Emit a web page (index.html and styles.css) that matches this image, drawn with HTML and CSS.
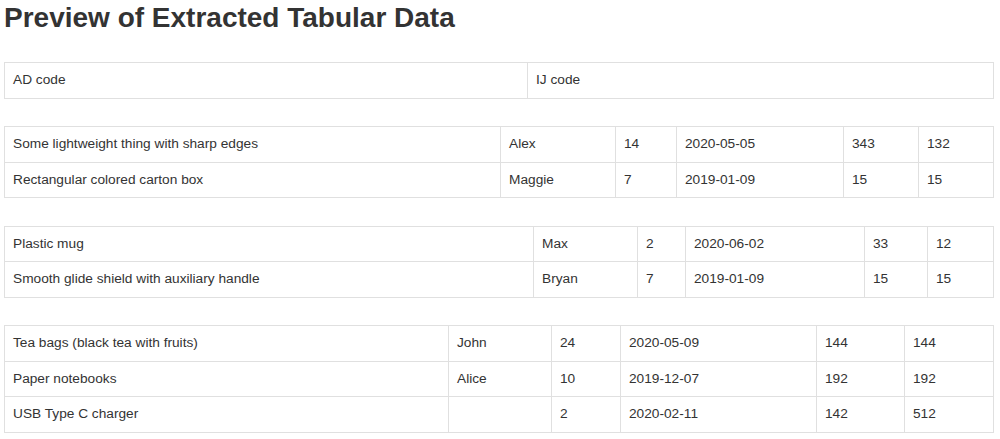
FILE: index.html
```html
<!DOCTYPE html>
<html lang="en">
<head>
<meta charset="utf-8">
<title>Preview of Extracted Tabular Data</title>
<link rel="stylesheet" href="styles.css">
</head>
<body>
<div class="page">
  <h1 class="title">Preview of Extracted Tabular Data</h1>

  <table class="grid t0">
    <colgroup><col class="c1"><col class="c2"></colgroup>
    <tbody>
      <tr><td>AD code</td><td>IJ code</td></tr>
    </tbody>
  </table>

  <table class="grid t1">
    <colgroup><col class="c1"><col class="c2"><col class="c3"><col class="c4"><col class="c5"><col class="c6"></colgroup>
    <tbody>
      <tr><td>Some lightweight thing with sharp edges</td><td>Alex</td><td>14</td><td>2020-05-05</td><td>343</td><td>132</td></tr>
      <tr><td>Rectangular colored carton box</td><td>Maggie</td><td>7</td><td>2019-01-09</td><td>15</td><td>15</td></tr>
    </tbody>
  </table>

  <table class="grid t2">
    <colgroup><col class="c1"><col class="c2"><col class="c3"><col class="c4"><col class="c5"><col class="c6"></colgroup>
    <tbody>
      <tr><td>Plastic mug</td><td>Max</td><td>2</td><td>2020-06-02</td><td>33</td><td>12</td></tr>
      <tr><td>Smooth glide shield with auxiliary handle</td><td>Bryan</td><td>7</td><td>2019-01-09</td><td>15</td><td>15</td></tr>
    </tbody>
  </table>

  <table class="grid t3">
    <colgroup><col class="c1"><col class="c2"><col class="c3"><col class="c4"><col class="c5"><col class="c6"></colgroup>
    <tbody>
      <tr><td>Tea bags (black tea with fruits)</td><td>John</td><td>24</td><td>2020-05-09</td><td>144</td><td>144</td></tr>
      <tr><td>Paper notebooks</td><td>Alice</td><td>10</td><td>2019-12-07</td><td>192</td><td>192</td></tr>
      <tr><td>USB Type C charger</td><td></td><td>2</td><td>2020-02-11</td><td>142</td><td>512</td></tr>
    </tbody>
  </table>
</div>
</body>
</html>
```

FILE: styles.css
```css
html, body {
  margin: 0;
  padding: 0;
  background: #ffffff;
}

body {
  font-family: "Liberation Sans", Arial, Helvetica, sans-serif;
  color: #333333;
  font-size: 14px;
}

.page {
  padding: 0 7px 0 4px;
}

.title {
  margin: 0 0 26px 0;
  font-size: 28px;
  line-height: 36px;
  font-weight: bold;
  color: #333333;
}

.grid {
  width: 989px;
  border-collapse: collapse;
  table-layout: fixed;
  margin: 0 0 27.5px 0;
}

.grid td {
  border: 1px solid #e0e0e0;
  padding: 8px 8px;
  line-height: 18.5px;
  font-size: 13.7px;
  white-space: nowrap;
  vertical-align: top;
}

.t0 .c1 { width: 523px; }
.t0 .c2 { width: 466px; }

.t1 .c1 { width: 496px; }
.t1 .c2 { width: 115px; }
.t1 .c3 { width: 61px; }
.t1 .c4 { width: 167px; }
.t1 .c5 { width: 75px; }
.t1 .c6 { width: 75px; }

.t2 .c1 { width: 529px; }
.t2 .c2 { width: 104px; }
.t2 .c3 { width: 48px; }
.t2 .c4 { width: 179px; }
.t2 .c5 { width: 63px; }
.t2 .c6 { width: 66px; }

.t3 .c1 { width: 444px; }
.t3 .c2 { width: 103px; }
.t3 .c3 { width: 69px; }
.t3 .c4 { width: 196px; }
.t3 .c5 { width: 88px; }
.t3 .c6 { width: 89px; }
```
